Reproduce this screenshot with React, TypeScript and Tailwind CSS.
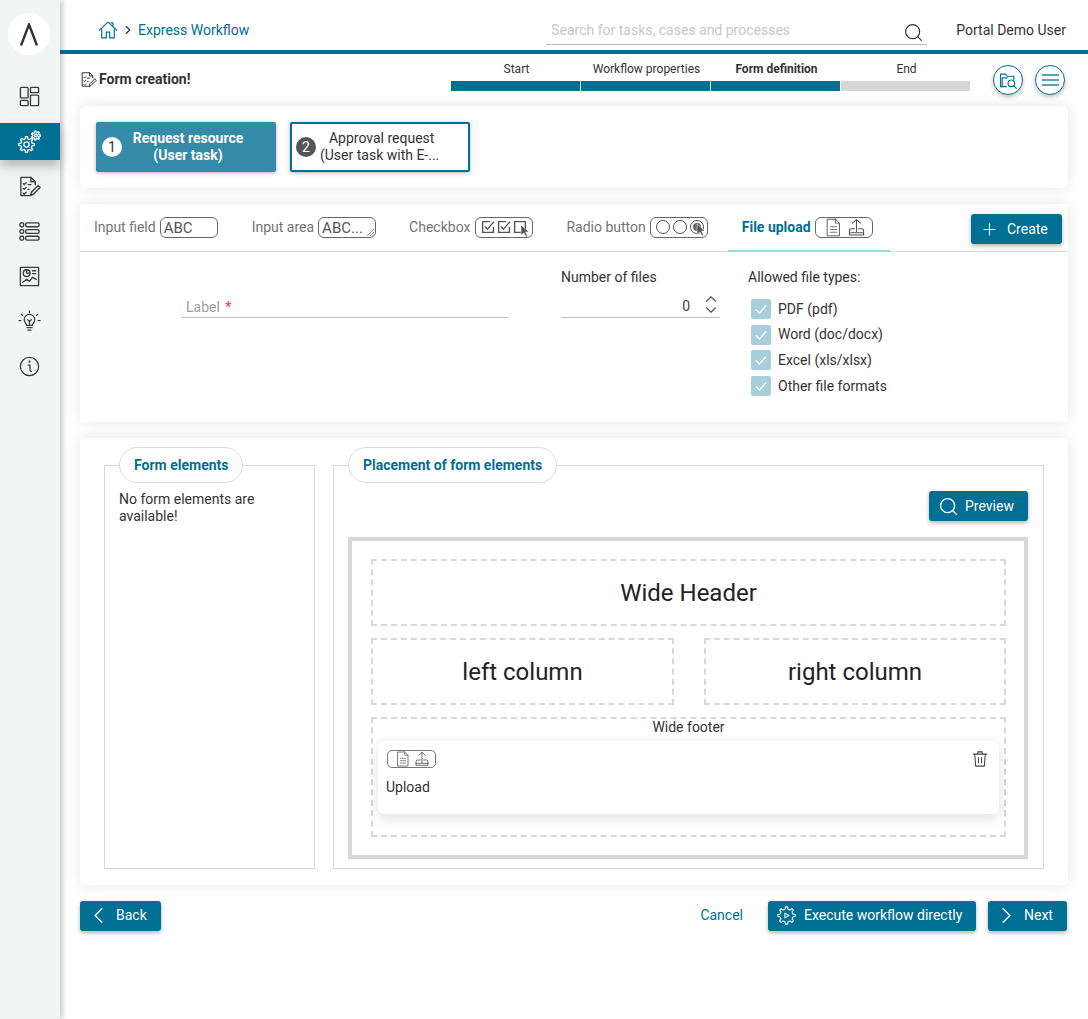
import { ReactNode } from "react";
import { ChevronDown, ChevronLeft, ChevronRight, ChevronUp, Plus, Search } from "lucide-react";

const Svg = ({
  size = 20,
  width = 1.4,
  className = "",
  children,
}: {
  size?: number;
  width?: number;
  className?: string;
  children: ReactNode;
}) => (
  <svg
    width={size}
    height={size}
    viewBox="0 0 24 24"
    fill="none"
    stroke="currentColor"
    strokeWidth={width}
    strokeLinecap="round"
    strokeLinejoin="round"
    className={className}
  >
    {children}
  </svg>
);

// outline of a toothed gear, used by the nav icon and the execute button
const gearPath = (cx: number, cy: number, outer: number, inner: number, teeth: number) => {
  const points: string[] = [];
  const step = (Math.PI * 2) / teeth;
  for (let i = 0; i < teeth; i++) {
    const a = i * step;
    const offsets: [number, number][] = [
      [-0.3, inner],
      [-0.16, outer],
      [0.16, outer],
      [0.3, inner],
    ];
    offsets.forEach(([o, r]) => {
      const angle = a + o * step;
      points.push(`${(cx + Math.cos(angle) * r).toFixed(2)} ${(cy + Math.sin(angle) * r).toFixed(2)}`);
    });
  }
  return `M${points.join("L")}Z`;
};

const HomeIcon = () => (
  <Svg size={20} className="text-[#006f94]">
    <path d="M1.500 12.500 12 2.500l10.500 10M18 3.500v4.500M18 3.500h-2.500" />
    <path d="M4.500 10.500V21.500h5.500v-7h4v7h5.500V10.500" />
  </Svg>
);

const DashboardIcon = () => (
  <Svg size={23} width={1.4}>
    <rect x="2.500" y="2.500" width="8" height="11" rx="1" />
    <rect x="2.500" y="16" width="8" height="5.500" rx="1" />
    <rect x="13" y="2.500" width="8.500" height="5.500" rx="1" />
    <rect x="13" y="10.500" width="8.500" height="11" rx="1" />
  </Svg>
);

const GearsIcon = () => (
  <Svg size={24} width={1.3} className="text-white">
    <circle cx="9.500" cy="14.500" r="2.600" />
    <path d={gearPath(9.500, 14.500, 7.800, 5.800, 8)} />
    <circle cx="19" cy="5.500" r="1.300" />
    <path d={gearPath(19, 5.500, 4.500, 3.200, 7)} />
  </Svg>
);

const TaskEditIcon = ({ size = 23 }: { size?: number }) => (
  <Svg size={size} width={1.4}>
    <path d="M12 21.500H3V2.500h10.500L18 7v3" />
    <path d="M13.500 2.500V7H18" />
    <path d="M5.500 9l1 1 2-2M5.500 14l1 1 2-2M5.500 19l1 1 2-2M10.500 10h3M10.500 15h1" />
    <path d="M13 21.500l1-3.500 7-7 2 2-7 7z" />
  </Svg>
);

const ListIcon = () => (
  <Svg size={23} width={1.4}>
    <rect x="2" y="3" width="4" height="4" rx="1.500" />
    <rect x="2" y="10" width="4" height="4" rx="1.500" />
    <rect x="2" y="17" width="4" height="4" rx="1.500" />
    <rect x="8" y="3" width="14" height="4" rx="1.500" />
    <rect x="8" y="10" width="14" height="4" rx="1.500" />
    <rect x="8" y="17" width="14" height="4" rx="1.500" />
  </Svg>
);

const ReportIcon = () => (
  <Svg size={23} width={1.4}>
    <rect x="2.500" y="2.500" width="19" height="19" />
    <circle cx="9" cy="8.500" r="3.500" />
    <path d="M9 5v3.500h3.500M15 6h3.500M15 9h3.500M5 18l4-3 3 2 3-4 4 2" />
  </Svg>
);

const BulbIcon = () => (
  <Svg size={23} width={1.3}>
    <path d="M9 16c0-2-2.500-3-2.500-6a5.500 5.500 0 0 1 11 0c0 3-2.500 4-2.500 6z" />
    <path d="M9.500 18.500h5M10.500 21h3M12 16v-5M10 10l2 2 2-2" />
    <path d="M12 1v1.500M3.500 4.500l1.200 1.200M20.500 4.500l-1.200 1.200M1 11h2M21 11h2" />
  </Svg>
);

const InfoIcon = () => (
  <Svg size={23} width={1.3}>
    <circle cx="12" cy="12" r="9.500" />
    <path d="M10.500 10.500H12.500V16c0 .8.500 1 1.500 1" />
    <circle cx="12" cy="7" r=".5" />
  </Svg>
);

const FolderSearchIcon = () => (
  <Svg size={20} className="text-[#006f94]">
    <path d="M10 20H3V5h6l2 2.500h8V11" />
    <path d="M5 20V9.500h6" />
    <circle cx="16" cy="16" r="4" />
    <path d="M19 19l3 3" />
  </Svg>
);

const FileIcon = ({ size = 20 }: { size?: number }) => (
  <Svg size={size} width={1.2} className="text-[#555]">
    <path d="M4.500 1.500h10L19.500 6.500v16h-15z" />
    <path d="M14.500 1.500v5h5M8 11h8M8 14.500h8M8 18h8" strokeWidth={1} />
  </Svg>
);

const UploadIcon = ({ size = 20 }: { size?: number }) => (
  <Svg size={size} width={1.3} className="text-[#555]">
    <path d="M12 17V2M7 6.500 12 2l5 4.500" />
    <path d="M9.500 13.500H5.500Q3 13.500 3 16.500V21.500H21V16.500Q21 13.500 18.500 13.500H14.500M3 18.500H21" />
  </Svg>
);

const TrashIcon = () => (
  <Svg size={18} className="text-[#444]">
    <path d="M3 5.500h18M9 5.500V2.500h6v3M5 5.500l1.200 16h11.600l1.200-16M10 10v7M14 10v7" />
  </Svg>
);

const GearPlayIcon = () => (
  <Svg size={19} width={1.3} className="text-white">
    <path d={gearPath(12, 12, 11, 8.200, 8)} />
    <path d="M10 9l5 3-5 3z" />
  </Svg>
);

const Cursor = () => (
  <svg width="10" height="12" viewBox="0 0 10 12" className="absolute right-[-3px] bottom-[-3px]">
    <path d="M1 0l8 7H5.500l2 4-1.500 1-2-4L1 10z" fill="#555" stroke="#fff" strokeWidth={0.5} />
  </svg>
);

const CheckSquare = ({ cursor = false }: { cursor?: boolean }) => (
  <span className="relative block">
    <svg width="14" height="14" viewBox="0 0 13 13" fill="none" stroke="#555" strokeWidth={1.3}>
      <path d="M11.500 6.500v5h-10v-10h7" />
      {!cursor && <path d="M3.500 6l2.500 2.500 6-7" />}
      {cursor && <path d="M8.500 1.500h3v5" />}
    </svg>
    {cursor && <Cursor />}
  </span>
);

const RadioDot = ({ cursor = false }: { cursor?: boolean }) => (
  <span className="relative block w-[14px] h-[14px] rounded-full border border-[#555]">
    {cursor && <span className="absolute inset-[2px] rounded-full bg-[#666]" />}
    {cursor && <Cursor />}
  </span>
);

const Pill = ({ children, className = "" }: { children: ReactNode; className?: string }) => (
  <span
    className={`relative flex items-center w-[58px] h-[21px] rounded-[6px] border border-[#666] text-[#555] text-[15px] ${className}`}
  >
    {children}
  </span>
);

const Tab = ({
  label,
  active = false,
  className = "",
  children,
}: {
  label: string;
  active?: boolean;
  className?: string;
  children: ReactNode;
}) => (
  <div
    className={`flex items-center pl-[14px] h-[48px] -mb-px border-b-2 ${className} ${
      active ? "border-[#92d9e6] text-[#006f94] font-bold" : "border-transparent text-[#757575]"
    }`}
  >
    <span>{label}</span>
    {children}
  </div>
);

const TealButton = ({ children, className = "" }: { children: ReactNode; className?: string }) => (
  <button
    className={`flex items-center h-[30px] rounded-[3px] bg-[#006f94] text-white text-[14px] shadow-[0_2px_4px_rgba(0,0,0,0.3)] ${className}`}
  >
    {children}
  </button>
);

const FileType = ({ label }: { label: string }) => (
  <div className="flex items-center gap-[7px] h-[20px]">
    <span className="flex items-center justify-center w-[20px] h-[20px] rounded-[2px] bg-[#a8cedb]">
      <svg width="14" height="14" viewBox="0 0 14 14" fill="none" stroke="#fff" strokeWidth={1.4}>
        <path d="M2 7.500l3.500 3.500L12 3.500" />
      </svg>
    </span>
    <span>{label}</span>
  </div>
);

const Legend = ({ children }: { children: ReactNode }) => (
  <legend className="h-[36px] px-[14px] flex items-center rounded-full border border-[#dcdcdc] bg-white text-[#006f94] font-bold text-[14px]">
    {children}
  </legend>
);

const DropZone = ({ children, className = "" }: { children: ReactNode; className?: string }) => (
  <div
    className={`flex items-center justify-center border-2 border-dashed border-[#d8d8d8] text-[24px] text-[#222] ${className}`}
  >
    {children}
  </div>
);

const navIcons = [
  { icon: <ListIcon />, key: "list" },
  { icon: <ReportIcon />, key: "report" },
  { icon: <BulbIcon />, key: "bulb" },
  { icon: <InfoIcon />, key: "info" },
];

const steps = [
  { label: "Start", done: true },
  { label: "Workflow properties", done: true },
  { label: "Form definition", done: true, current: true },
  { label: "End", done: false },
];

export default function App() {
  return (
    <div
      className="flex min-h-[1019px] bg-white text-[14px] text-[#333]"
      style={{ fontFamily: "Roboto, sans-serif" }}
    >
      {/* Sidebar */}
      <aside className="w-[60px] shrink-0 bg-[#f3f5f5] shadow-[2px_0_6px_rgba(0,0,0,0.25)] z-10 text-[#3a3a3a] flex flex-col items-stretch">
        <div className="flex justify-center pt-[13px] pr-[2px]">
          <div className="w-[42px] h-[42px] rounded-full bg-white flex items-center justify-center">
            <svg width="18" height="23" viewBox="0 0 18 23" fill="none" stroke="#333" strokeWidth={2.4}>
              <path d="M1 22.500 9 1.500l8 21" />
            </svg>
          </div>
        </div>
        <div className="flex justify-center pr-[2px] mt-[30px] h-[22px]">
          <DashboardIcon />
        </div>
        <div className="flex justify-center pr-[2px] items-center mt-[16px] h-[37px] bg-[#006f94] shadow-[0_6px_10px_rgba(0,0,0,0.25)]">
          <GearsIcon />
        </div>
        <div className="flex justify-center pr-[2px] mt-[15px] h-[22px]">
          <TaskEditIcon />
        </div>
        {navIcons.map((item) => (
          <div key={item.key} className="flex justify-center pr-[2px] mt-[23px] h-[22px] first:mt-[22px]">
            {item.icon}
          </div>
        ))}
      </aside>

      <main className="flex-1 min-w-0">
        {/* Header */}
        <header className="h-[54px] border-b-4 border-[#006f94] flex items-center pl-[38px] pr-[22px] pt-[10px]">
          <div className="flex items-center text-[#006f94]">
            <HomeIcon />
            <ChevronRight size={14} className="ml-[3px] mr-[3px] text-[#333]" strokeWidth={2} />
            <span>Express Workflow</span>
          </div>
          <div className="ml-[297px] w-[381px] h-[28px] mt-[2px] border-b border-[#bdbdbd] flex items-center justify-between pl-[5px] pr-[3px]">
            <span className="text-[#c8c8c8]">Search for tasks, cases and processes</span>
            <Search size={21} strokeWidth={1.3} className="text-[#333] mt-[3px]" />
          </div>
          <span className="ml-auto">Portal Demo User</span>
        </header>

        <div className="px-[20px]">
          {/* Title and progress */}
          <div className="h-[52px] flex">
            <div className="flex items-center gap-[2px] w-[371px] h-[50px] font-bold text-[#333] text-[14px]">
              <TaskEditIcon size={17} />
              <span>Form creation!</span>
            </div>
            <div className="flex gap-px w-[519px] pt-[8px]">
              {steps.map((step) => (
                <div key={step.label} className="flex-1 flex flex-col">
                  <span
                    className={`h-[19px] pl-[2px] text-center text-[12px] leading-[14px] ${
                      step.current ? "font-bold" : ""
                    }`}
                  >
                    {step.label}
                  </span>
                  <div className={`h-[10px] ${step.done ? "bg-[#006f94]" : "bg-[#d6d8d8]"}`} />
                </div>
              ))}
            </div>
            <div className="ml-[23px] flex gap-[12px] pt-[11px]">
              <button className="w-[30px] h-[30px] rounded-full border border-[#006f94] bg-white flex items-center justify-center shadow-[0_2px_4px_rgba(0,0,0,0.25)]">
                <FolderSearchIcon />
              </button>
              <button className="w-[30px] h-[30px] rounded-full border border-[#006f94] bg-white flex flex-col items-center justify-center gap-[3px] shadow-[0_2px_4px_rgba(0,0,0,0.25)]">
                <span className="w-[17px] h-[2px] bg-[#5aa3bb]" />
                <span className="w-[17px] h-[2px] bg-[#5aa3bb]" />
                <span className="w-[17px] h-[2px] bg-[#5aa3bb]" />
              </button>
            </div>
          </div>

          {/* Workflow tasks */}
          <section className="h-[82px] rounded-[6px] bg-white shadow-[0_0_14px_rgba(0,0,0,0.1)] flex gap-[14px] p-[16px]">
            <div className="w-[180px] h-[50px] rounded-[2px] bg-[#338aa9] shadow-[0_1px_4px_rgba(0,0,0,0.3)] flex items-center pl-[6px] pr-[22px] text-white font-bold leading-[17px] text-[14px]">
              <span className="w-[20px] h-[20px] shrink-0 rounded-full bg-white text-[#333] font-normal flex items-center justify-center text-[14px]">
                1
              </span>
              <span className="flex-1 text-center">
                Request resource
                <br />
                (User task)
              </span>
            </div>
            <div className="w-[180px] h-[50px] rounded-[2px] border-2 border-[#006f94] bg-white shadow-[0_1px_4px_rgba(0,0,0,0.3)] flex items-center pl-[4px] leading-[17px]">
              <span className="w-[20px] h-[20px] shrink-0 rounded-full bg-[#555] text-white flex items-center justify-center">
                2
              </span>
              <span className="ml-[4px] text-center">
                <span className="pl-[4px]">Approval request</span>
                <br />
                (User task with E-...
              </span>
            </div>
          </section>

          {/* Field creation */}
          <section className="mt-[16px] h-[218px] rounded-[4px] bg-white shadow-[0_0_14px_rgba(0,0,0,0.1)]">
            <div className="flex h-[48px] border-b border-[#dcdcdc] gap-[3px] relative">
              <Tab label="Input field" className="gap-1 pr-[17px]">
                <Pill className="pl-[3px] pt-[2px]">ABC</Pill>
              </Tab>
              <Tab label="Input area" className="gap-1 pr-[16px]">
                <Pill className="pl-[3px] pt-[2px]">
                  ABC...
                  <svg width="7" height="7" viewBox="0 0 7 7" stroke="#777" strokeWidth={0.8} className="absolute right-[1px] bottom-[1px]">
                    <path d="M0 7l7-7M3 7l4-4M5.500 7 7 5.500" />
                  </svg>
                </Pill>
              </Tab>
              <Tab label="Checkbox" className="gap-[5px] pr-[16px]">
                <Pill className="pl-[5px] gap-[2px]">
                  <CheckSquare />
                  <CheckSquare />
                  <CheckSquare cursor />
                </Pill>
              </Tab>
              <Tab label="Radio button" className="gap-1 pr-[17px]">
                <Pill className="pl-[5px] gap-[3px]">
                  <RadioDot />
                  <RadioDot />
                  <RadioDot cursor />
                </Pill>
              </Tab>
              <Tab label="File upload" active className="gap-1 pr-[17px]">
                <Pill className="pl-[8px] gap-[4px]">
                  <FileIcon size={19} />
                  <UploadIcon size={19} />
                </Pill>
              </Tab>
              <TealButton className="ml-auto mt-[10px] mr-[6px] w-[91px] pl-[9px] gap-[8px]">
                <Plus size={19} strokeWidth={1.5} />
                <span>Create</span>
              </TealButton>
            </div>
            <div className="flex pl-[101px]">
              <div className="w-[327px] mt-[45px] h-[21px] border-b border-[#bdbdbd] pl-[5px] text-[#9e9e9e] leading-[20px]">
                Label <span className="text-[#f0287a] ml-[2px]">*</span>
              </div>
              <div className="ml-[53px] w-[159px] pt-[17px]">
                <div className="leading-[17px]">Number of files</div>
                <div className="mt-[9px] h-[23px] border-b border-[#bdbdbd] flex items-center justify-end">
                  <span className="mr-[12px] text-[#444]">0</span>
                  <span className="flex flex-col items-center text-[#555]">
                    <ChevronUp size={18} strokeWidth={1.5} className="-mb-[7px] -mt-[3px]" />
                    <ChevronDown size={18} strokeWidth={1.5} />
                  </span>
                </div>
              </div>
              <div className="ml-[28px] pt-[17px]">
                <div className="leading-[17px]">Allowed file types:</div>
                <div className="mt-[13px] ml-[3px] flex flex-col gap-[5.700px]">
                  <FileType label="PDF (pdf)" />
                  <FileType label="Word (doc/docx)" />
                  <FileType label="Excel (xls/xlsx)" />
                  <FileType label="Other file formats" />
                </div>
              </div>
            </div>
          </section>

          {/* Form layout */}
          <section className="mt-[16px] h-[447px] rounded-[4px] bg-white shadow-[0_0_14px_rgba(0,0,0,0.1)] pt-[9px] pl-[24px] flex gap-[18px]">
            <fieldset className="w-[211px] h-[422px] border border-[#d8d8d8] px-[14px]">
              <Legend>Form elements</Legend>
              <p className="mt-[8px] leading-[17px]">No form elements are available!</p>
            </fieldset>
            <fieldset className="w-[711px] h-[422px] border border-[#d8d8d8] px-[14px]">
              <Legend>Placement of form elements</Legend>
              <div className="flex justify-end mt-[8px] mr-px">
                <TealButton className="w-[99px] pl-[9px] gap-[6px]">
                  <Search size={21} strokeWidth={1.5} />
                  <span>Preview</span>
                </TealButton>
              </div>
              <div className="mt-[16px] w-[680px] h-[322px] border-4 border-[#d8d8d8] pl-[19px] pr-[18px] pt-[18px]">
                <DropZone className="h-[67px]">Wide Header</DropZone>
                <div className="mt-[12px] flex justify-between">
                  <DropZone className="w-[303px] h-[67px]">left column</DropZone>
                  <DropZone className="w-[302px] h-[67px]">right column</DropZone>
                </div>
                <div className="mt-[12px] h-[120px] border-2 border-dashed border-[#d8d8d8] px-[5px]">
                  <div className="text-center leading-[17px]">Wide footer</div>
                  <div className="mt-[5px] h-[73px] rounded-[6px] bg-white shadow-[0_4px_14px_rgba(0,0,0,0.13)] pl-[9px] pr-[10px] pt-[9px]">
                    <div className="flex items-start justify-between">
                      <span className="flex items-center gap-[3px] pl-[7px] w-[49px] h-[18px] rounded-[5px] border border-[#777]">
                        <FileIcon size={16} />
                        <UploadIcon size={16} />
                      </span>
                      <TrashIcon />
                    </div>
                    <div className="-ml-[1px] mt-[9px]">Upload</div>
                  </div>
                </div>
              </div>
            </fieldset>
          </section>

          {/* Actions */}
          <div className="mt-[16px] flex items-center pr-px">
            <TealButton className="w-[81px] pl-[5px] gap-[4px] pb-[2px]">
              <ChevronLeft size={27} strokeWidth={1.2} />
              <span>Back</span>
            </TealButton>
            <span className="ml-auto text-[#006f94] -mt-[2px]">Cancel</span>
            <TealButton className="ml-[25px] w-[208px] pl-[9px] gap-[8px] pb-[2px]">
              <GearPlayIcon />
              <span>Execute workflow directly</span>
            </TealButton>
            <TealButton className="ml-[12px] w-[79px] pl-[5px] gap-[4px] pb-[2px]">
              <ChevronRight size={27} strokeWidth={1.2} />
              <span>Next</span>
            </TealButton>
          </div>
        </div>
      </main>
    </div>
  );
}
